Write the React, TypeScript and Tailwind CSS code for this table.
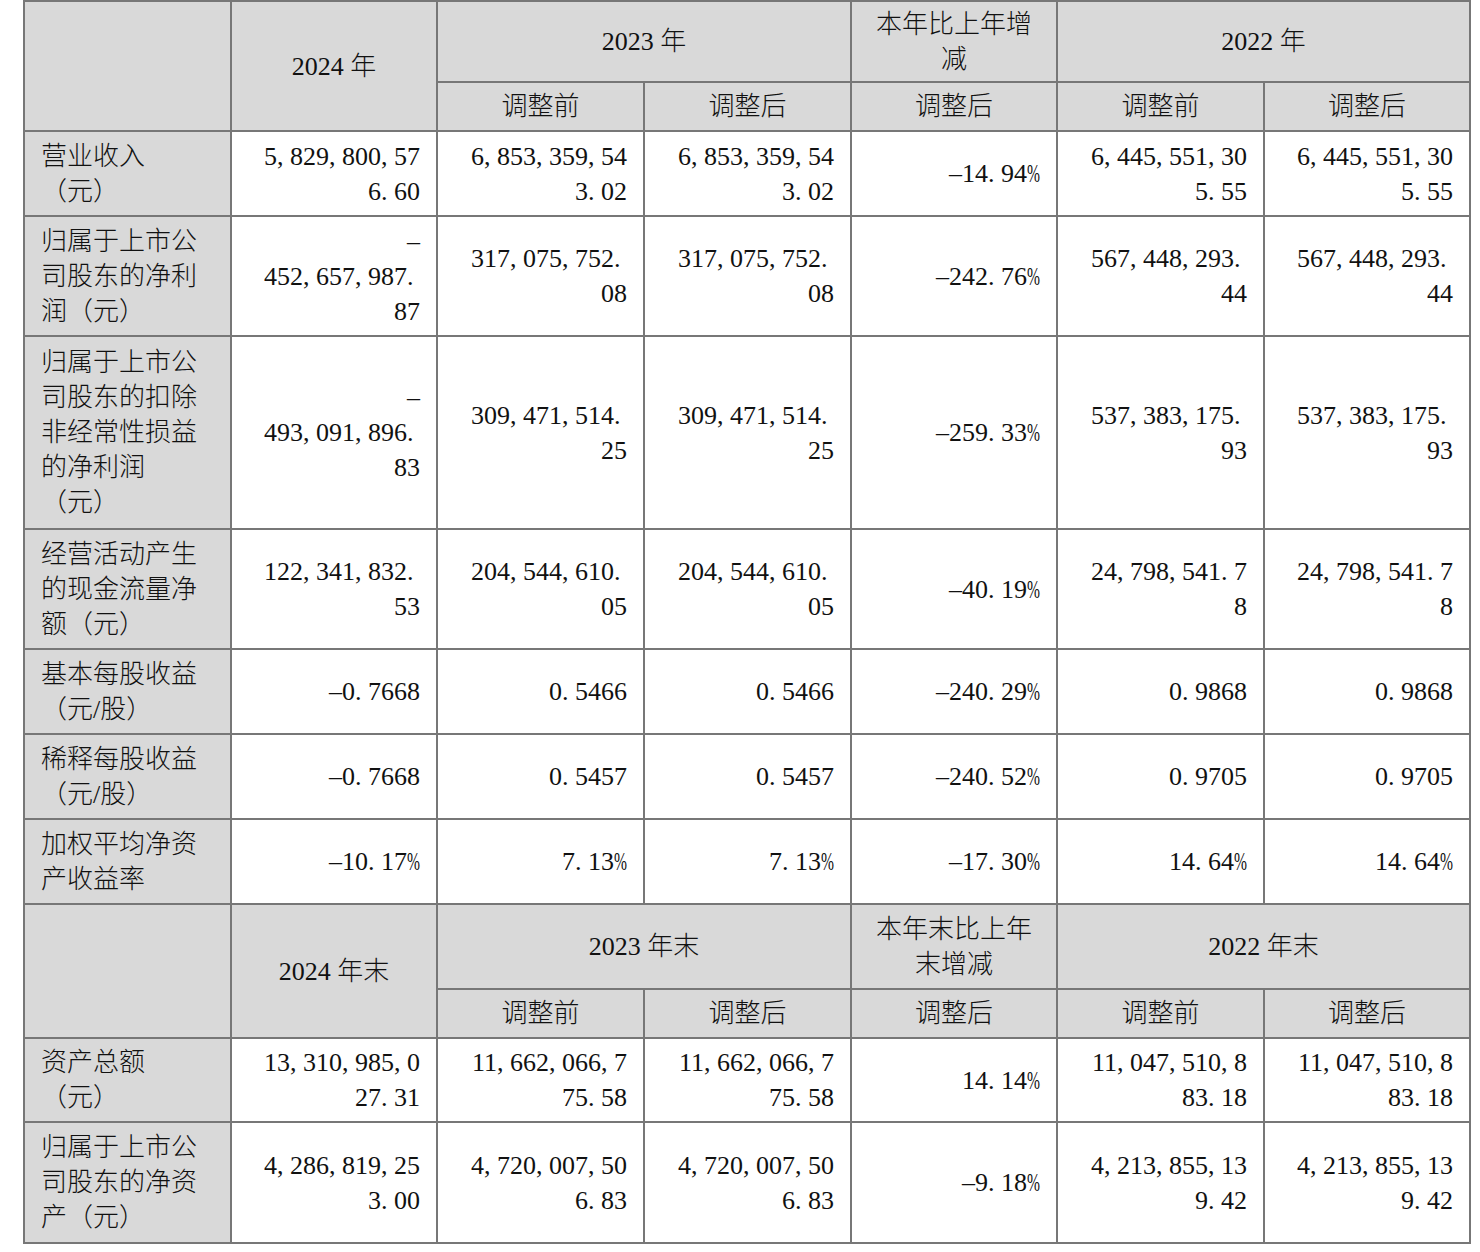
import React from "react";

// half-width punctuation, like the SimSun look of the source PDF
function Num({ text }: { text: string }) {
  const lines = text.split("/");
  return (
    <>
      {lines.map((line, i) => (
        <div key={i} className="whitespace-nowrap">
          {line.split("").map((ch, j) => {
            if (/[0-9]/.test(ch)) return ch;
            if (ch === "," || ch === ".")
              return (
                <span key={j} className="inline-block w-[0.5em] text-left">
                  {ch}
                </span>
              );
            if (ch === "%")
              return (
                <span key={j} className="inline-block w-[0.5em] text-left">
                  <span className="inline-block origin-left scale-x-[0.6]">%</span>
                </span>
              );
            return (
              <span key={j} className="inline-block w-[0.5em] text-center">
                –
              </span>
            );
          })}
        </div>
      ))}
    </>
  );
}

function Label({ text }: { text: string }) {
  return (
    <>
      {text.split("|").map((l, i) => (
        <div key={i} className="whitespace-nowrap">
          {l}
        </div>
      ))}
    </>
  );
}

type Row = { label: string; h: string; v: [string, string, string, string, string, string] };

const top: Row[] = [
  { label: "营业收入|（元）", h: "h-[85px]", v: ["5,829,800,57/6.60", "6,853,359,54/3.02", "6,853,359,54/3.02", "-14.94%", "6,445,551,30/5.55", "6,445,551,30/5.55"] },
  { label: "归属于上市公|司股东的净利|润（元）", h: "h-[120px]", v: ["-/452,657,987./87", "317,075,752./08", "317,075,752./08", "-242.76%", "567,448,293./44", "567,448,293./44"] },
  { label: "归属于上市公|司股东的扣除|非经常性损益|的净利润|（元）", h: "h-[193px]", v: ["-/493,091,896./83", "309,471,514./25", "309,471,514./25", "-259.33%", "537,383,175./93", "537,383,175./93"] },
  { label: "经营活动产生|的现金流量净|额（元）", h: "h-[120px]", v: ["122,341,832./53", "204,544,610./05", "204,544,610./05", "-40.19%", "24,798,541.7/8", "24,798,541.7/8"] },
  { label: "基本每股收益|（元/股）", h: "h-[85px]", v: ["-0.7668", "0.5466", "0.5466", "-240.29%", "0.9868", "0.9868"] },
  { label: "稀释每股收益|（元/股）", h: "h-[85px]", v: ["-0.7668", "0.5457", "0.5457", "-240.52%", "0.9705", "0.9705"] },
  { label: "加权平均净资|产收益率", h: "h-[85px]", v: ["-10.17%", "7.13%", "7.13%", "-17.30%", "14.64%", "14.64%"] },
];

const bottom: Row[] = [
  { label: "资产总额|（元）", h: "h-[84px]", v: ["13,310,985,0/27.31", "11,662,066,7/75.58", "11,662,066,7/75.58", "14.14%", "11,047,510,8/83.18", "11,047,510,8/83.18"] },
  { label: "归属于上市公|司股东的净资|产（元）", h: "h-[121px]", v: ["4,286,819,25/3.00", "4,720,007,50/6.83", "4,720,007,50/6.83", "-9.18%", "4,213,855,13/9.42", "4,213,855,13/9.42"] },
];

const cell = "border-2 border-[#777] px-4 align-middle";
const head = `${cell} bg-[#d9d9d9] text-center`;

function Header({ y24, y23, diff, y22, h }: { y24: string; y23: string; diff: string; y22: string; h: string }) {
  return (
    <>
      <tr className={h}>
        <td rowSpan={2} className={head}></td>
        <td rowSpan={2} className={head}>{y24}</td>
        <td colSpan={2} className={head}>{y23}</td>
        <td className={head}>
          <Label text={diff} />
        </td>
        <td colSpan={2} className={head}>{y22}</td>
      </tr>
      <tr className="h-[49px]">
        <td className={head}>调整前</td>
        <td className={head}>调整后</td>
        <td className={head}>调整后</td>
        <td className={head}>调整前</td>
        <td className={head}>调整后</td>
      </tr>
    </>
  );
}

function Body({ rows }: { rows: Row[] }) {
  return (
    <>
      {rows.map((r, i) => (
        <tr key={i} className={r.h}>
          <td className={`${cell} bg-[#d9d9d9] text-left`}>
            <Label text={r.label} />
          </td>
          {r.v.map((v, j) => (
            <td key={j} className={`${cell} bg-white text-right`}>
              <Num text={v} />
            </td>
          ))}
        </tr>
      ))}
    </>
  );
}

export default function App() {
  return (
    <div className="min-h-[1252px] bg-white pl-[23px] font-['Liberation_Serif','Noto_Sans_CJK_SC',serif] text-[26px] font-light leading-[35px] text-[#111]">
      <table className="w-[1448px] table-fixed border-collapse">
        <colgroup>
          <col className="w-[207px]" />
          <col className="w-[206px]" />
          <col className="w-[207px]" />
          <col className="w-[207px]" />
          <col className="w-[206px]" />
          <col className="w-[207px]" />
          <col className="w-[206px]" />
        </colgroup>
        <tbody>
          <Header h="h-[81px]" y24="2024 年" y23="2023 年" diff="本年比上年增|减" y22="2022 年" />
          <Body rows={top} />
          <Header h="h-[85px]" y24="2024 年末" y23="2023 年末" diff="本年末比上年|末增减" y22="2022 年末" />
          <Body rows={bottom} />
        </tbody>
      </table>
    </div>
  );
}
